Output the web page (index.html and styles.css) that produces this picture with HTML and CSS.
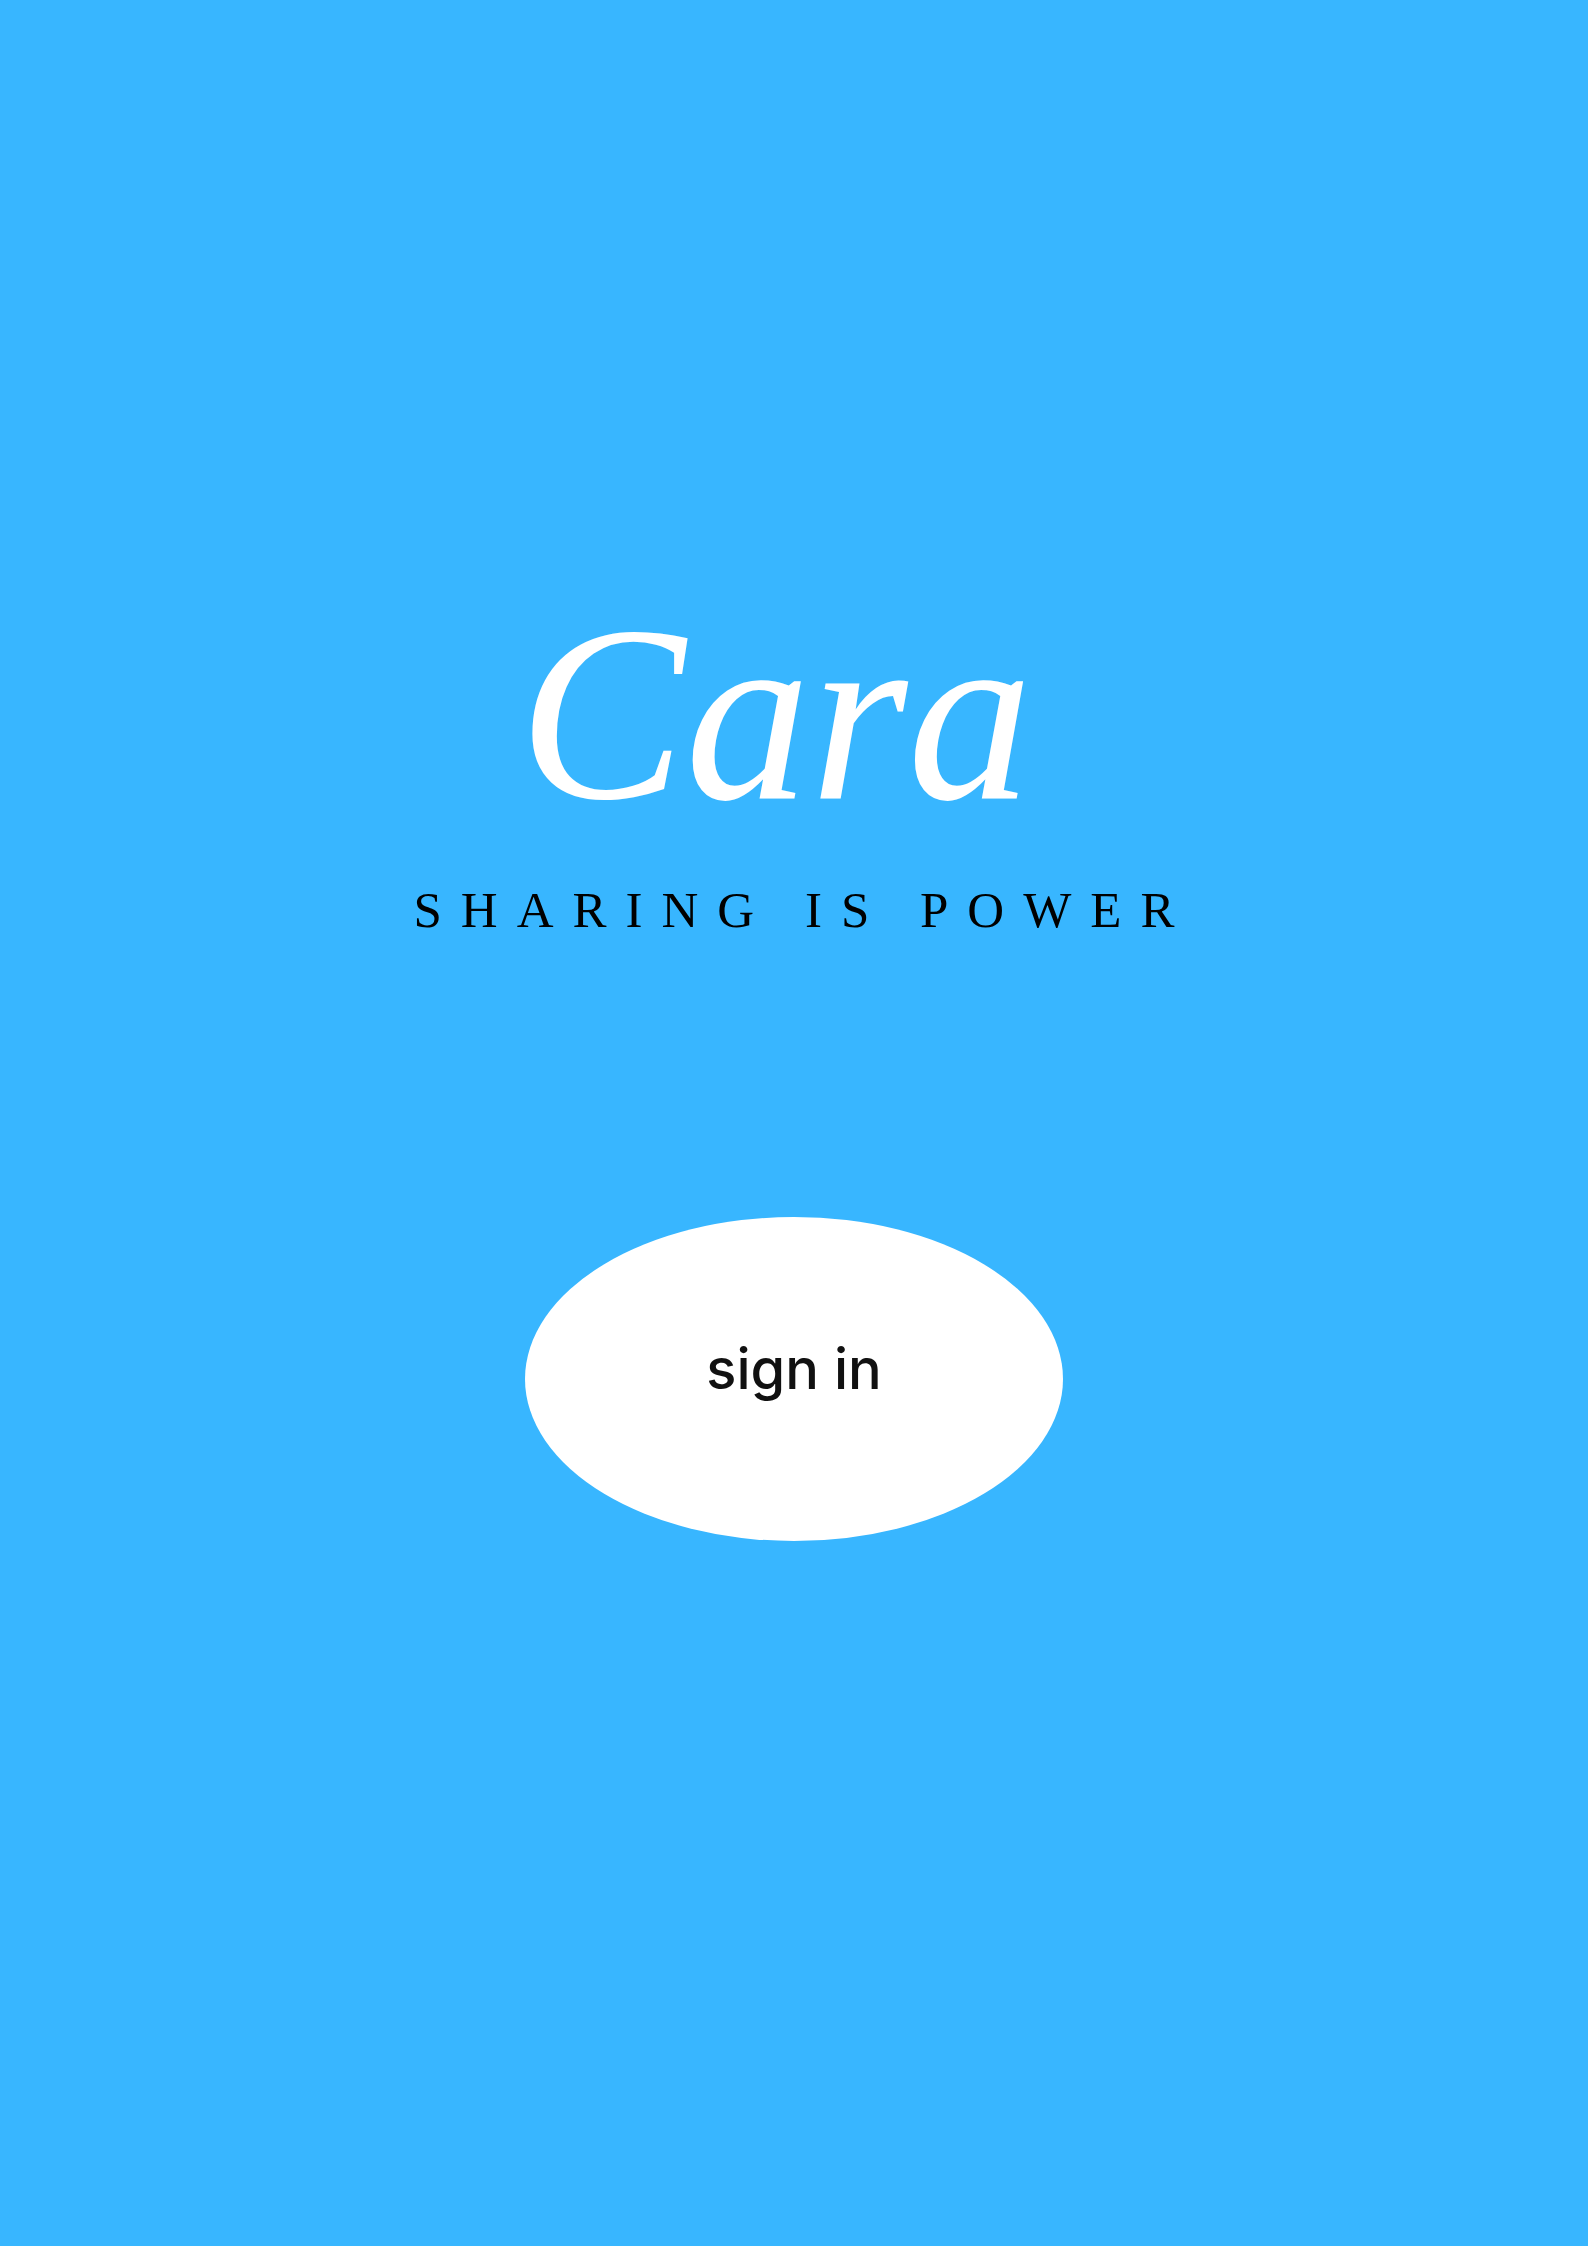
FILE: index.html
```html
<!DOCTYPE html>
<html lang="en">
<head>
<meta charset="utf-8">
<title>Cara</title>
<link rel="stylesheet" href="styles.css">
</head>
<body>
<main class="page">
  <header class="brand">
    <h1 class="title">Cara</h1>
    <p class="tagline">SHARING IS POWER</p>
  </header>
  <button class="signin" type="button">sign in</button>
</main>
</body>
</html>
```

FILE: styles.css
```css
html, body {
  margin: 0;
  padding: 0;
}
body {
  background: #38b6ff;
  min-height: 2246px;
}
.page {
  display: flex;
  flex-direction: column;
  align-items: center;
  padding-top: 564px;
}
.brand {
  display: flex;
  flex-direction: column;
  align-items: center;
}
.title {
  margin: 0;
  padding-right: 37px;
  font-family: "Liberation Serif", serif;
  font-style: italic;
  font-weight: normal;
  font-size: 250px;
  line-height: 300px;
  color: #ffffff;
}
.tagline {
  margin: 16px 0 0 0;
  padding-left: 19px;
  font-family: "Liberation Serif", serif;
  font-size: 51px;
  line-height: 60px;
  letter-spacing: 19px;
  color: #000000;
}
.signin {
  margin-top: 277px;
  width: 538px;
  height: 324px;
  border: none;
  border-radius: 50%;
  background: #ffffff;
  font-family: "Inter", sans-serif;
  font-size: 56px;
  font-weight: 500;
  line-height: 60px;
  color: #111111;
  padding: 0 0 20px 0;
  cursor: pointer;
}
```
